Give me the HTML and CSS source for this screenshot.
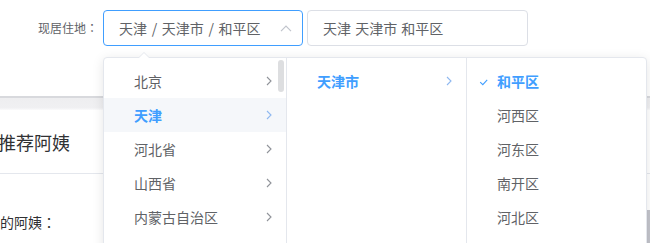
FILE: index.html
```html
<!DOCTYPE html>
<html lang="zh-CN">
<head>
<meta charset="utf-8">
<link rel="stylesheet" href="styles.css">
</head>
<body>
<div class="page">
  <div class="form-row">
    <span class="label">现居住地<span class="colon" lang="ja">：</span></span>
    <div class="input is-focus">
      <span class="input-text wide">天津 / 天津市 / 和平区</span>
      <svg class="caret" width="12" height="7" viewBox="0 0 12 7"><path d="M1 6.2 L6 1.2 L11 6.2" fill="none" stroke="#C0C4CC" stroke-width="1.2"/></svg>
    </div>
    <div class="input plain">
      <span class="input-text mid">天津 天津市 和平区</span>
    </div>
  </div>
  <div class="band"></div>
  <div class="card-head"><span class="title">推荐阿姨</span></div>
  <div class="card-body"><span class="sub">的阿姨<span class="colon" lang="ja">：</span></span></div>
  <div class="page-scroll"></div>
</div>

<div class="dropdown">
  <span class="popper-arrow"></span>
  <div class="menu col1">
    <ul class="menu-list">
      <li class="node"><span class="node-label">北京</span><svg class="postfix" width="6" height="10" viewBox="0 0 6 10"><path d="M1 1 L5 5 L1 9" fill="none" stroke="currentColor" stroke-width="1.1"/></svg></li>
      <li class="node active hover"><span class="node-label">天津</span><svg class="postfix" width="6" height="10" viewBox="0 0 6 10"><path d="M1 1 L5 5 L1 9" fill="none" stroke="currentColor" stroke-width="1.1"/></svg></li>
      <li class="node"><span class="node-label">河北省</span><svg class="postfix" width="6" height="10" viewBox="0 0 6 10"><path d="M1 1 L5 5 L1 9" fill="none" stroke="currentColor" stroke-width="1.1"/></svg></li>
      <li class="node"><span class="node-label">山西省</span><svg class="postfix" width="6" height="10" viewBox="0 0 6 10"><path d="M1 1 L5 5 L1 9" fill="none" stroke="currentColor" stroke-width="1.1"/></svg></li>
      <li class="node"><span class="node-label">内蒙古自治区</span><svg class="postfix" width="6" height="10" viewBox="0 0 6 10"><path d="M1 1 L5 5 L1 9" fill="none" stroke="currentColor" stroke-width="1.1"/></svg></li>
    </ul>
    <span class="menu-scrollbar"></span>
  </div>
  <div class="menu col2">
    <ul class="menu-list">
      <li class="node active"><span class="node-label">天津市</span><svg class="postfix" width="6" height="10" viewBox="0 0 6 10"><path d="M1 1 L5 5 L1 9" fill="none" stroke="currentColor" stroke-width="1.1"/></svg></li>
    </ul>
  </div>
  <div class="menu col3">
    <ul class="menu-list">
      <li class="node active"><svg class="prefix" width="14" height="14" viewBox="0 0 14 14"><path d="M3.2 8.2 L5.8 10.6 L10.2 5.8" fill="none" stroke="#409EFF" stroke-width="1.1"/></svg><span class="node-label">和平区</span></li>
      <li class="node"><span class="node-label">河西区</span></li>
      <li class="node"><span class="node-label">河东区</span></li>
      <li class="node"><span class="node-label">南开区</span></li>
      <li class="node"><span class="node-label">河北区</span></li>
    </ul>
  </div>
</div>
</body>
</html>
```

FILE: styles.css
```css
* { box-sizing: border-box; }
html, body {
  margin: 0;
  padding: 0;
  width: 650px;
  height: 243px;
  overflow: hidden;
  background: #fff;
  font-family: "Noto Sans CJK SC", "Noto Sans", "Liberation Sans", sans-serif;
}
.page {
  position: relative;
  width: 650px;
  height: 243px;
}
.colon {
  font-family: "Noto Sans CJK JP", "Noto Sans CJK TC", sans-serif;
}
.form-row {
  display: flex;
  align-items: center;
  padding-top: 10px;
  height: 46px;
}
.label {
  width: 103px;
  padding-left: 38px;
  font-size: 12px;
  color: #606266;
  line-height: 36px;
  white-space: nowrap;
}
.input {
  position: relative;
  height: 36px;
  border: 1px solid #DCDFE6;
  border-radius: 4px;
  padding: 0 15px;
  display: flex;
  align-items: center;
  font-size: 14px;
  color: #606266;
}
.input.is-focus {
  width: 200px;
  border-color: #409EFF;
}
.input.plain {
  width: 221px;
  margin-left: 4px;
}
.input-text { white-space: nowrap; }
.input-text.wide { word-spacing: 1.5px; }
.input-text.mid { word-spacing: 1px; }
.caret {
  position: absolute;
  right: 10px;
  top: 14px;
}
.band {
  margin-top: 50px;
  height: 14px;
  background: linear-gradient(#d8d9dd 0, #d8d9dd 2px, #eeeef0 2px, #f0f0f2 12px, #f7f7f9 13px, #fafafa 14px);
}
.card-head {
  height: 64px;
  display: flex;
  align-items: center;
  border-bottom: 1px solid #E4E7ED;
}
.title {
  margin-left: -2px;
  font-size: 18px;
  color: #303133;
  white-space: nowrap;
}
.card-body {
  padding-top: 38px;
}
.sub {
  display: block;
  font-size: 14px;
  line-height: 20px;
  color: #303133;
  white-space: nowrap;
}
.page-scroll {
  position: absolute;
  right: 0;
  top: 210px;
  width: 3px;
  height: 33px;
  background: #c3c4cb;
}

.dropdown {
  position: absolute;
  left: 103px;
  top: 57px;
  width: 544px;
  height: 200px;
  background: #fff;
  border: 1px solid #E4E7ED;
  border-radius: 4px;
  box-shadow: 0 2px 12px 0 rgba(0, 0, 0, 0.1);
  display: flex;
}
.popper-arrow {
  position: absolute;
  top: -6px;
  left: 34px;
  width: 0;
  height: 0;
  border-left: 6px solid transparent;
  border-right: 6px solid transparent;
  border-bottom: 6px solid #E4E7ED;
}
.popper-arrow::after {
  content: "";
  position: absolute;
  left: -5px;
  top: 1px;
  border-left: 5px solid transparent;
  border-right: 5px solid transparent;
  border-bottom: 5px solid #fff;
}
.menu {
  position: relative;
  height: 100%;
  border-right: 1px solid #E4E7ED;
}
.col1 { width: 183px; }
.col2 { width: 180px; }
.col3 { flex: 1; border-right: none; }
.menu-list {
  list-style: none;
  margin: 0;
  padding: 6px 0;
}
.node {
  position: relative;
  height: 34px;
  line-height: 34px;
  padding: 0 30px 0 20px;
  display: flex;
  align-items: center;
  font-size: 14px;
  color: #606266;
}
.node.hover { background: #F5F7FA; }
.node.active {
  color: #409EFF;
  font-weight: bold;
}
.node-label {
  padding: 0 10px;
  white-space: nowrap;
}
.postfix {
  position: absolute;
  right: 14px;
  top: 12px;
  color: #909399;
}
.node.active .postfix { color: #8fb8f0; }
.prefix {
  position: absolute;
  left: 10px;
  top: 10px;
}
.menu-scrollbar {
  position: absolute;
  right: 2px;
  top: 2px;
  width: 6px;
  height: 32px;
  border-radius: 3px;
  background: rgba(144, 147, 153, 0.3);
}
```
